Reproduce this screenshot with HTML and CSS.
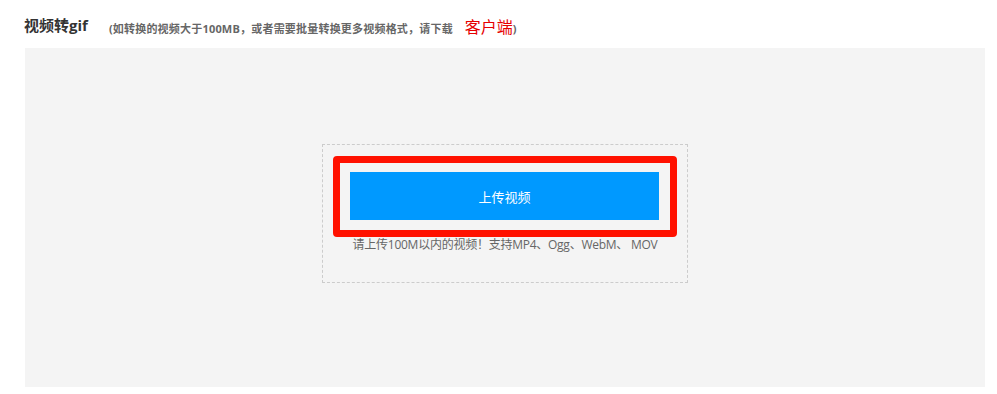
FILE: index.html
```html
<!DOCTYPE html>
<html lang="zh-CN">
<head>
    <meta charset="UTF-8">
    <meta name="viewport" content="width=device-width, initial-scale=1.0">
    <title>视频转gif</title>
    <link rel="stylesheet" href="styles.css">
</head>
<body>

    <div class="page">
        <div class="title-bar">
            <span class="title">视频转gif</span>
            <span class="tip">(如转换的视频大于100MB，或者需要批量转换更多视频格式，请下载<a class="client" href="#">客户端</a>)</span>
        </div>

        <div class="panel">
            <div class="upload-box">
                <div class="highlight">
                    <button class="upload-btn">上传视频</button>
                </div>
                <p class="hint">请上传100M以内的视频！支持MP4、Ogg、WebM、 MOV</p>
            </div>
        </div>
    </div>

</body>
</html>
```

FILE: styles.css
```css
/* General */
body {
    font-family: "Open Sans", "Noto Sans CJK SC", sans-serif;
    margin: 0;
    padding: 0;
    background: #fff;
    color: #333;
}

.page {
    width: 960px;
    padding-left: 25px;
}

/* Title */
.title-bar {
    height: 48px;
    display: flex;
    align-items: center;
    margin-left: -1px;
}

.title {
    font-size: 15px;
    font-weight: bold;
    color: #333;
    margin-right: 21px;
}

.tip {
    font-size: 11px;
    font-weight: bold;
    letter-spacing: 0.2px;
    color: #666;
    margin-top: 3px;
}

.client {
    color: #e60000;
    font-size: 16px;
    font-weight: normal;
    letter-spacing: 0;
    text-decoration: none;
    margin-left: 12px;
}

/* Panel */
.panel {
    background: #f4f4f4;
    height: 339px;
    padding-top: 96px;
    box-sizing: border-box;
}

.upload-box {
    width: 366px;
    height: 139px;
    margin: 0 auto;
    border: 1px dashed #ccc;
    box-sizing: border-box;
    padding: 11px 10px 0;
    text-align: center;
}

.highlight {
    border: 7px solid #ff1100;
    border-radius: 4px;
    padding: 9px 11px 10px 10px;
}

.upload-btn {
    display: block;
    width: 100%;
    height: 48px;
    border: none;
    background: #0099ff;
    color: #fff;
    font-family: inherit;
    font-size: 13px;
    cursor: pointer;
}

.hint {
    margin: 0;
    font-size: 12px;
    letter-spacing: -0.25px;
    line-height: 16px;
    color: #666;
}
```
